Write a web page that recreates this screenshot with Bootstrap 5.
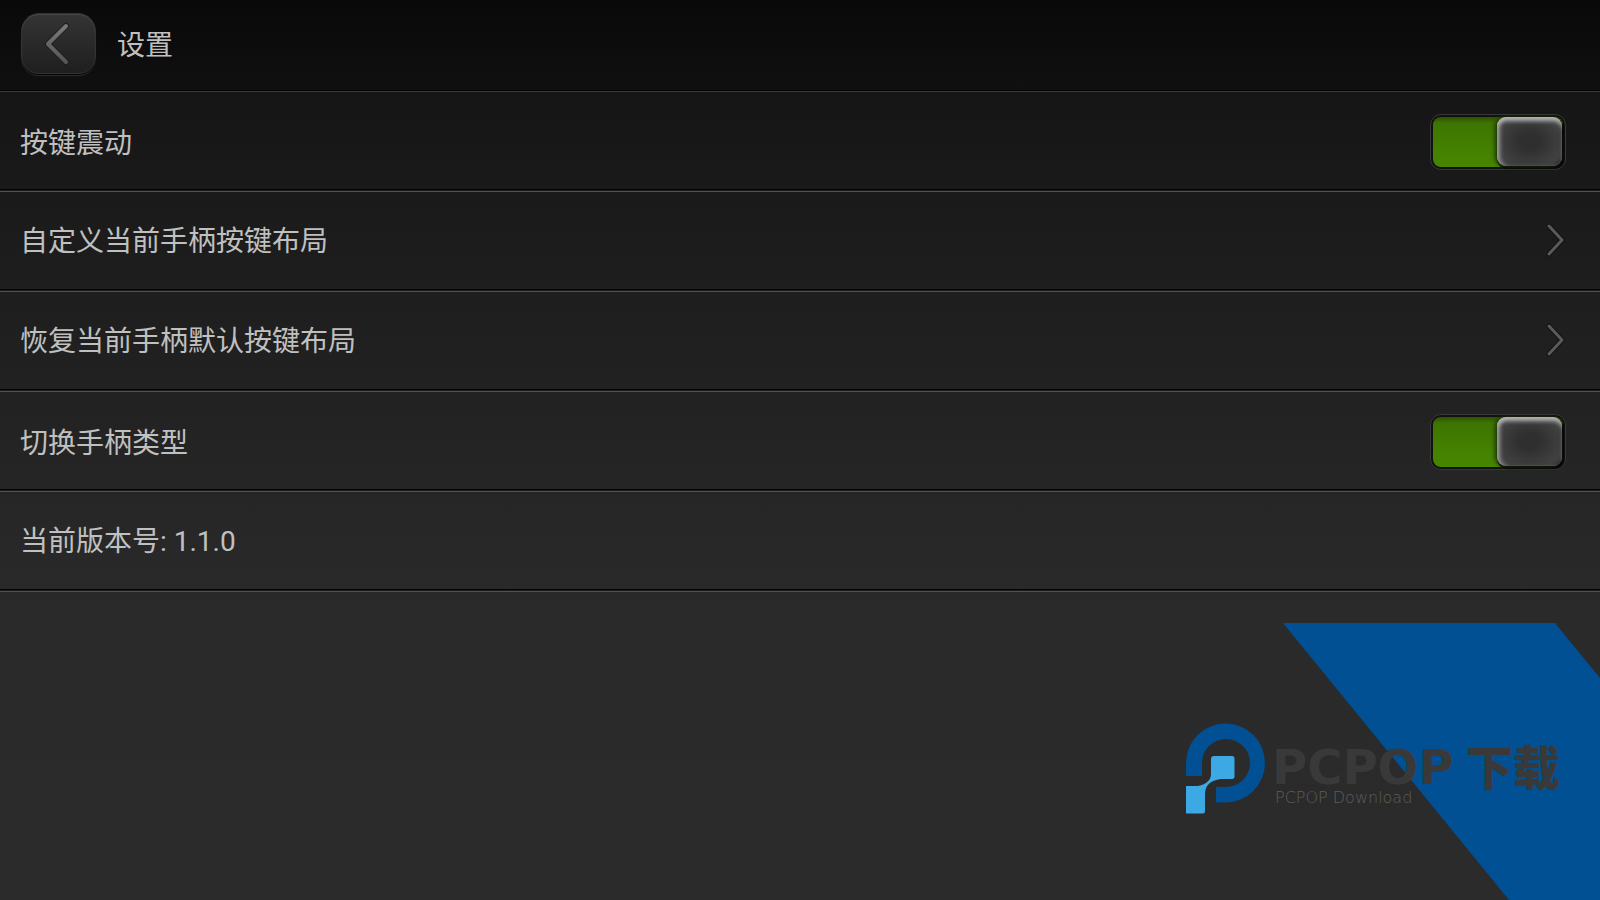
<!DOCTYPE html>
<html lang="zh-CN">
<head>
<meta charset="utf-8">
<meta name="viewport" content="width=device-width, initial-scale=1">
<title>设置</title>
<link href="https://cdn.jsdelivr.net/npm/bootstrap@5.3.0/dist/css/bootstrap.min.css" rel="stylesheet">
<style>
body {
  font-family: Roboto, "Noto Sans CJK SC", sans-serif;
  color: #c0c0c0;
  background: linear-gradient(#111 0, #161616 110px, #1c1c1c 240px, #212121 380px, #272727 520px, #2a2a2a 620px, #2b2b2b 100%) #2b2b2b;
}
.topbar {
  height: 92px;
  padding: 0 21px 4px;
  gap: 21px;
  background: linear-gradient(#090909, #101010);
  border-bottom: 1px solid #3a3a3a;
  box-shadow: inset 0 -1px #030303;
}
.topbar h1 { padding-top: 4px; font-size: 28px; line-height: 40px; }
.back-btn {
  width: 75px;
  height: 61px;
  border: 1px solid #333;
  border-radius: 18px;
  background: linear-gradient(#343434, #1f1f1f);
  box-shadow: inset 0 1px 1px #484848, 0 1px 1px #000, 0 2px 1px #333;
}
.setting {
  height: 100px;
  padding: 0 34px 2px 20px;
  font-size: 28px;
  line-height: 40px;
  color: #c0c0c0;
  border-bottom: 1px solid #505050;
  box-shadow: inset 0 -1px #1c1c1c, inset 0 -2px #030303;
}
.setting:hover { color: #c0c0c0; }
.setting span { padding-top: 2px; }
.setting svg { margin: 0 1px 1px 0; }
.setting-switch { padding-bottom: 0; }
.setting-switch label { padding-top: 4px; }
.toggle {
  appearance: none;
  flex: none;
  display: flex;
  justify-content: flex-start;
  width: 136px;
  height: 56px;
  margin: 0;
  padding: 2px;
  border: 1px solid #383838;
  border-radius: 11px;
  background: #151515;
}
.toggle:checked {
  justify-content: flex-end;
  background: linear-gradient(#2c5200, #3e7400 6px, #438000 30px, #478600) content-box, #121212;
}
.toggle::before {
  content: "";
  width: 65px;
  height: 49px;
  margin-right: 1px;
  border-radius: 9px;
  background: radial-gradient(ellipse 60% 65% at 50% 50%, #2f2f2f 25%, #464646 100%);
  box-shadow: inset 0 5px 4px -1px #b4b4b4, inset 4px 0 4px -1px #949494, inset -2px -2px 3px #303030, -2px 0 4px #1c3300, 1px 2px 1px 1px #080808;
}
.brand { width: 430px; height: 277px; }
</style>
</head>
<body>
<div class="min-vh-100 d-flex flex-column">
  <header class="topbar d-flex align-items-center">
    <button type="button" class="back-btn btn p-0 d-flex align-items-center justify-content-center" aria-label="返回">
      <svg width="30" height="46" viewBox="0 0 30 46" fill="none" stroke-linecap="round" stroke-linejoin="round" aria-hidden="true">
        <defs><linearGradient id="arrow" x2="0" y2="1"><stop stop-color="#787878"/><stop offset="1" stop-color="#555"/></linearGradient></defs>
        <path d="M22 5 4 23 22 41" stroke="#1c1c1c" stroke-width="6"/>
        <path d="M22 5 4 23 22 41" stroke="url(#arrow)" stroke-width="4"/>
      </svg>
    </button>
    <h1 class="m-0 fw-normal">设置</h1>
  </header>
  <main>
    <div class="setting setting-switch d-flex align-items-center justify-content-between">
      <label for="vibrate">按键震动</label>
      <input class="toggle" type="checkbox" role="switch" id="vibrate" checked>
    </div>
    <a href="#layout" class="setting d-flex align-items-center justify-content-between text-decoration-none">
      <span>自定义当前手柄按键布局</span>
      <svg width="20" height="36" viewBox="0 0 20 36" fill="none" stroke-linecap="round" stroke-linejoin="round" aria-hidden="true">
        <path d="M4 4 17 18 4 32" stroke="#131313" stroke-width="5"/><path d="M4 4 17 18 4 32" stroke="#5a5a5a" stroke-width="3"/>
      </svg>
    </a>
    <a href="#reset" class="setting d-flex align-items-center justify-content-between text-decoration-none">
      <span>恢复当前手柄默认按键布局</span>
      <svg width="20" height="36" viewBox="0 0 20 36" fill="none" stroke-linecap="round" stroke-linejoin="round" aria-hidden="true">
        <path d="M4 4 17 18 4 32" stroke="#131313" stroke-width="5"/><path d="M4 4 17 18 4 32" stroke="#5a5a5a" stroke-width="3"/>
      </svg>
    </a>
    <div class="setting setting-switch d-flex align-items-center justify-content-between">
      <label for="padtype">切换手柄类型</label>
      <input class="toggle" type="checkbox" role="switch" id="padtype" checked>
    </div>
    <div class="setting d-flex align-items-center"><span>当前版本号: 1.1.0</span></div>
  </main>
  <footer class="flex-grow-1 d-flex justify-content-end align-items-end">
    <svg class="brand d-block" viewBox="0 0 430 277">
      <path d="M113 0H385L430 55V277H339Z" fill="#005093"/>
      <path d="M16 153V140A39.500 39.500 0 1 1 55.500 179.500H46V164H55.500A24 24 0 1 0 32 140V153Z" fill="#005093"/>
      <path d="M44 133H62Q64.500 133 64.500 135.500V154Q64.500 156 62 156H51Q35 158 35 171V188Q35 190.500 33 190.500H16V163H28Q41 160 41 151V136Q41 133 44 133Z" fill="#3ca9e4"/>
      <g fill="#393939">
        <text x="102" y="161" font-family="DejaVu Sans" font-weight="700" font-size="48">PCPOP</text>
        <text x="296" y="162" font-family="Noto Sans CJK SC" font-weight="900" font-size="47">下载</text>
      </g>
      <text x="105" y="180" font-family="DejaVu Sans" font-weight="200" font-size="16" fill="#5c5c5c">PCPOP Download</text>
    </svg>
  </footer>
</div>
<script src="https://cdn.jsdelivr.net/npm/bootstrap@5.3.0/dist/js/bootstrap.bundle.min.js"></script>
</body>
</html>
